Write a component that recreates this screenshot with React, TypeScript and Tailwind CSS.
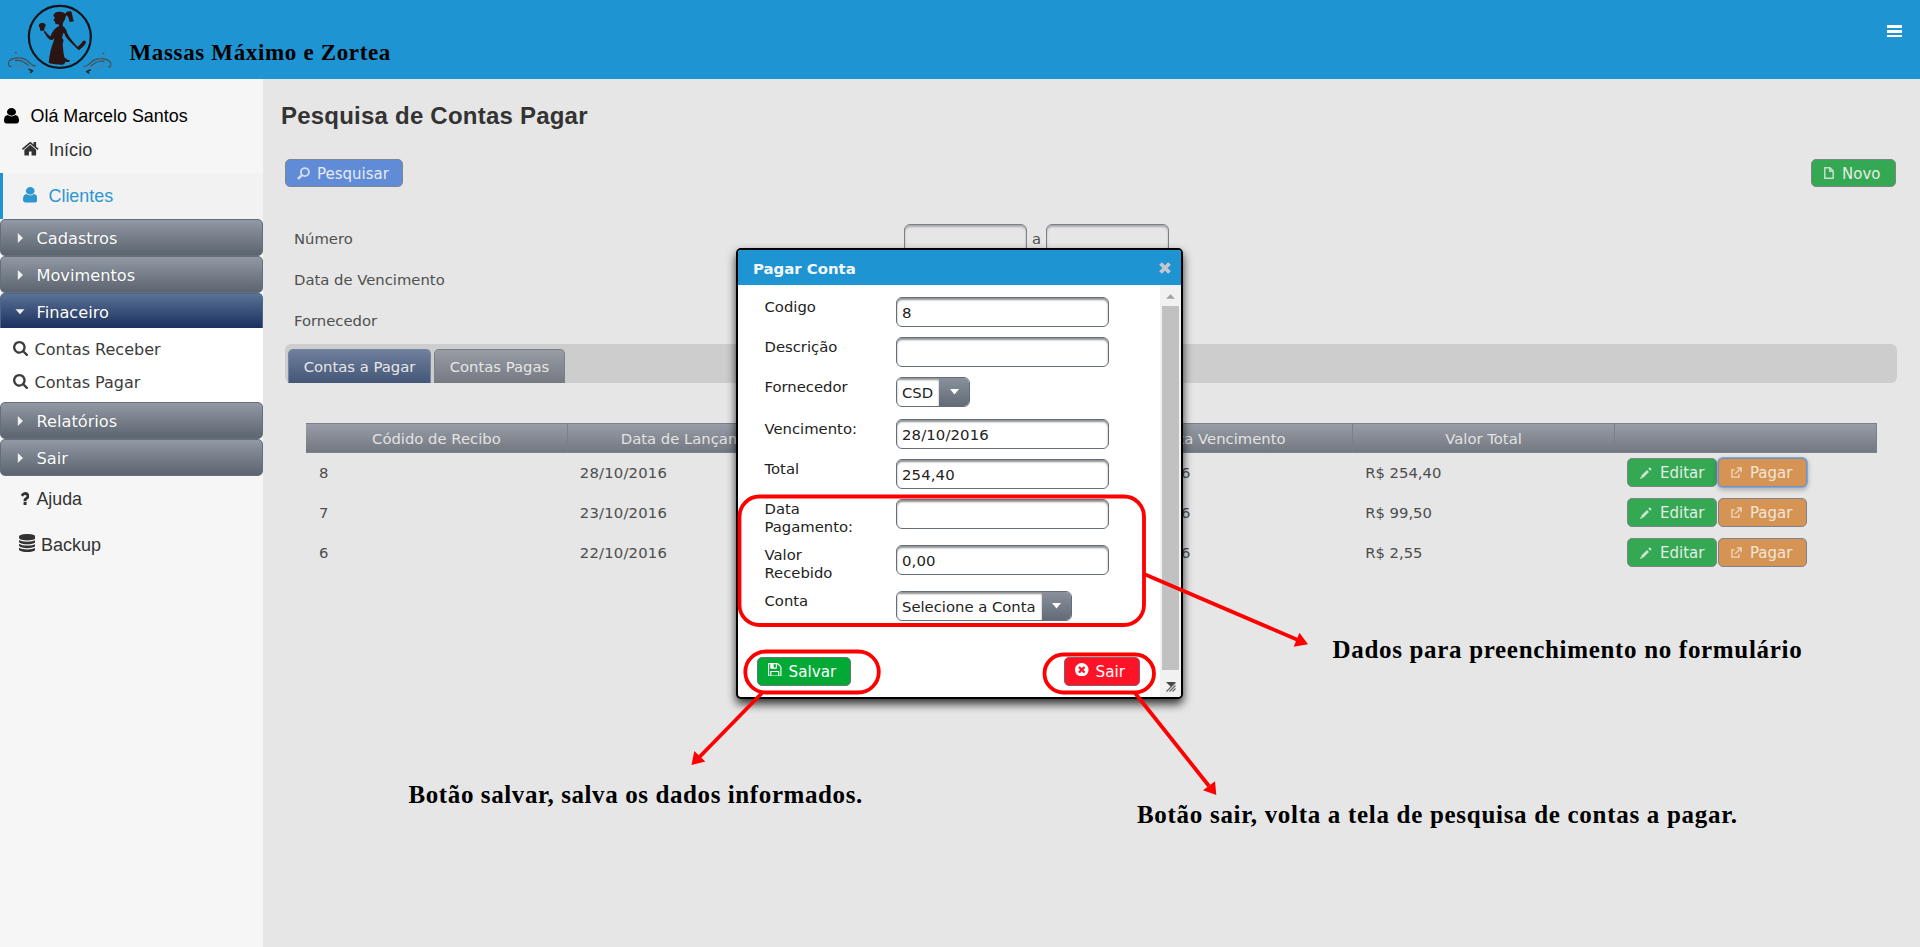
import React from "react";

type IconProps = { name: keyof typeof shapes; className?: string };

const shapes = {
  user: {
    box: "256 128 1280 1536",
    d: "M1536 1399q0 109-62.5 187t-150.5 78h-854q-88 0-150.5-78t-62.5-187q0-85 8.5-160.5t31.5-152 58.5-131 94-89 134.5-34.5q131 128 313 128t313-128q76 0 134.5 34.5t94 89 58.5 131 31.5 152 8.5 160.5zm-256-887q0 159-112.5 271.5t-271.5 112.5-271.5-112.5-112.5-271.5 112.5-271.5 271.5-112.5 271.5 112.5 112.5 271.5z",
  },
  home: {
    box: "89 253 1614 1283",
    d: "M1472 992v480q0 26-19 45t-45 19h-384v-384h-256v384h-384q-26 0-45-19t-19-45v-480q0-1 .5-3t.5-3l575-474 575 474q1 2 1 6zm223-69l-62 74q-8 9-21 11h-3q-13 0-21-7l-692-577-692 577q-12 8-24 7-13-2-21-11l-62-74q-8-10-7-23.5t11-21.5l719-599q32-26 76-26t76 26l244 204v-195q0-14 9-23t23-9h192q14 0 23 9t9 23v408l219 182q10 8 11 21.5t-7 23.5z",
  },
  search: {
    box: "64 128 1664 1664",
    d: "M1216 832q0-185-131.5-316.5t-316.5-131.5-316.5 131.5-131.5 316.5 131.5 316.5 316.5 131.5 316.5-131.5 131.5-316.5zm512 832q0 52-38 90t-90 38q-54 0-90-38l-343-342q-179 124-399 124-143 0-273.5-55.5t-225-150-150-225-55.5-273.5 55.5-273.5 150-225 225-150 273.5-55.5 273.5 55.5 225 150 150 225 55.5 273.5q0 220-124 399l343 343q37 37 37 90z",
  },
  question: {
    box: "387 256 1017 1280",
    d: "M1088 1256v240q0 16-12 28t-28 12h-240q-16 0-28-12t-12-28v-240q0-16 12-28t28-12h240q16 0 28 12t12 28zm316-600q0 54-15.5 101t-35 76.5-55 59.5-57.5 43.5-61 35.5q-41 23-68.5 65t-27.5 67q0 17-12 32.5t-28 15.5h-240q-15 0-25.5-18.5t-10.5-37.5v-45q0-83 65-156.5t143-108.5q59-27 84-56t25-76q0-42-46.5-74t-107.5-32q-65 0-108 29-35 25-107 115-13 16-31 16-12 0-25-8l-164-125q-13-10-15.5-25t5.5-28q160-266 464-266 80 0 161 31t146 83 106 127.5 41 158.5z",
  },
  database: {
    box: "128 0 1536 1792",
    d: "M896 768q237 0 443-43t325-127v170q0 69-103 128t-280 93.5-385 34.5-385-34.5-280-93.5-103-128v-170q119 84 325 127t443 43zm0 768q237 0 443-43t325-127v170q0 69-103 128t-280 93.5-385 34.5-385-34.5-280-93.5-103-128v-170q119 84 325 127t443 43zm0-384q237 0 443-43t325-127v170q0 69-103 128t-280 93.5-385 34.5-385-34.5-280-93.5-103-128v-170q119 84 325 127t443 43zm0-1152q208 0 385 34.5t280 93.5 103 128v128q0 69-103 128t-280 93.5-385 34.5-385-34.5-280-93.5-103-128v-128q0-69 103-128t280-93.5 385-34.5z",
  },
  floppy: {
    box: "128 128 1536 1536",
    d: "M512 1536h768v-384h-768v384zm896 0h128v-896q0-14-10-38.5t-20-34.5l-281-281q-10-10-34-20t-39-10v416q0 40-28 68t-68 28h-576q-40 0-68-28t-28-68v-416h-128v1280h128v-416q0-40 28-68t68-28h832q40 0 68 28t28 68v416zm-384-928v-320q0-13-9.5-22.5t-22.5-9.5h-192q-13 0-22.5 9.5t-9.5 22.5v320q0 13 9.5 22.5t22.5 9.5h192q13 0 22.5-9.5t9.5-22.5zm640 32v928q0 40-28 68t-68 28h-1344q-40 0-68-28t-28-68v-1344q0-40 28-68t68-28h928q40 0 88 20t76 48l280 280q28 28 48 76t20 88z",
  },
  timesCircle: {
    box: "128 128 1536 1536",
    d: "M1277 1122q0-26-19-45l-181-181 181-181q19-19 19-45 0-27-19-46l-90-90q-19-19-46-19-26 0-45 19l-181 181-181-181q-19-19-45-19-27 0-46 19l-90 90q-19 19-19 46 0 26 19 45l181 181-181 181q-19 19-19 45 0 27 19 46l90 90q19 19 46 19 26 0 45-19l181-181 181 181q19 19 45 19 27 0 46-19l90-90q19-19 19-46zm387-226q0 209-103 385.5t-279.5 279.5-385.5 103-385.5-103-279.5-279.5-103-385.5 103-385.5 279.5-279.5 385.5-103 385.5 103 279.5 279.5 103 385.5z",
  },
};

function Icon({ name, className = "" }: IconProps) {
  const s = shapes[name];
  return (
    <svg viewBox={s.box} preserveAspectRatio="none" fill="currentColor" className={`shrink-0 ${className}`}>
      <path d={s.d} />
    </svg>
  );
}

function Flourish() {
  return (
    <g fill="none" strokeLinecap="round">
      <path d="M106 197C98 200 94 193 84 184C70 171 42 170 28 183C22 191 26 201 33 199" stroke="#4a4a50" strokeWidth="3.500" />
      <path d="M46 182C60 178 73 185 86 197" stroke="#4a4a50" strokeWidth="3.500" />
      <path d="M59 178C57 167 50 166 47 159M51 205C45 197 56 190 60 198M64 207C60 198 76 194 77 203M84 197C94 199 98 206 94 213M46 184C51 188 49 195 43 196" stroke="#5a7890" strokeWidth="2.500" />
      <path d="M87 208L98 213M92 217L97 213" stroke="#26221f" strokeWidth="4.500" />
      <circle cx="47" cy="158" r="1.500" stroke="#4a4a50" strokeWidth="2" />
    </g>
  );
}

function Logo() {
  return (
    <svg viewBox="0 0 360 237" className="h-[79px] w-[120px] shrink-0">
      <circle cx="179.500" cy="110.500" r="93" fill="none" stroke="#101418" strokeWidth="6.500" />
      <g fill="#2b1512">
        <path d="M160 47C161 38 172 34 184 36C190 37 194 39 196 42C197 35 204 32 212 34C218 38 216 50 222 64L209 66C206 58 207 50 198 46C197 54 194 62 189 68L188 78C197 83 201 94 203 105L197 106L190 98L186 114C192 119 191 126 188 130C189 146 190 158 193 172C199 176 203 182 210 181C210 187 203 187 196 185C195 190 192 194 186 194C173 193 158 193 146 189C148 166 153 143 161 124L163 113C160 121 152 121 147 117C140 111 136 102 131 95L135 92C140 100 146 106 152 109C156 98 163 84 177 79L176 73L167 73L165 65L160 60L165 54Z" />
        <path d="M117 75C118 68 135 67 137 75C138 79 134 80 134 83L132 92L121 92L119 82C116 80 116 78 117 75Z" />
        <path d="M196 100L203 102C210 116 223 130 233 140C240 136 243 131 248 124C253 119 260 123 257 130C253 139 244 144 238 151L231 146C218 132 204 120 195 107Z" />
      </g>
      <Flourish />
      <g transform="matrix(-1 0 0 1 358 2)">
        <Flourish />
      </g>
    </svg>
  );
}

function Accordion({ label, open = false }: { label: string; open?: boolean }) {
  return (
    <div
      className={
        open
          ? "flex h-[35px] items-center rounded-t-[5px] border border-b-0 border-[#4f6585] bg-linear-to-b from-[#5b7194] to-[#1b315f] pt-[2px] text-[16.2px] text-white"
          : "flex h-[37px] items-center rounded-[5px] border border-[#656f7b] bg-linear-to-b from-[#9299a5] to-[#5b646f] pt-px text-[16.2px] text-white"
      }
    >
      <svg viewBox="0 0 10 10" className="ml-[14px] mr-[11.500px] size-[10px] shrink-0 fill-[#f0f0f0]">
        {open ? <path d="M.5 2.200H9.500L5 7.200Z" /> : <path d="M2.800 0V10L8 5Z" />}
      </svg>
      <span className="pt-[2px] [text-shadow:0_0_1px_rgba(0,0,0,0.3)]">{label}</span>
    </div>
  );
}

function Search16() {
  return (
    <svg viewBox="0 0 12 12" className="size-[13px] shrink-0 fill-none stroke-[#d3dcec]">
      <circle cx="7.300" cy="4.700" r="3.700" strokeWidth="1.700" />
      <path d="M4.600 7.500L.9 11" strokeWidth="2.400" />
    </svg>
  );
}

function Doc16() {
  return (
    <svg viewBox="0 0 10 12" className="h-[12px] w-[10px] shrink-0 fill-none stroke-[#c5dfcb]" strokeWidth="1.500">
      <path d="M.8 .8H6L9.200 4V11.200H.8ZM5.800 1V4.300H9" />
    </svg>
  );
}

function Pencil16() {
  return (
    <svg viewBox="0 0 12 12" className="size-[12px] shrink-0 stroke-[#cfe6d5]" strokeWidth="2.700">
      <path d="M2.200 9.800L8 4M9.300 2.700L10.700 1.300" />
      <path d="M.5 11.500L2.500 9.500" strokeWidth="1.500" />
    </svg>
  );
}

function Ext16() {
  return (
    <svg viewBox="0 0 12 12" className="size-[11px] shrink-0 fill-none stroke-[#eed7bf]" strokeWidth="1.500">
      <path d="M4 3.200H1V11H8.700V8" />
      <path d="M6.300 1H11V5.700M10.600 1.400L8 4M8 4L4.500 7.500" />
    </svg>
  );
}

function GridRow({ id, date, total, focused = false }: { id: string; date: string; total: string; focused?: boolean }) {
  return (
    <div className="grid h-[40px] grid-cols-[repeat(6,261.800px)] items-center text-[14.800px] text-[#4d4d4d] *:pl-[12px]">
      <span className="translate-x-px">{id}</span>
      <span className="tracking-[0.2px]">{date}</span>
      <span />
      <span className="tracking-[0.2px]">{date}</span>
      <span>{total}</span>
      <div className="flex gap-px pb-px">
        <button className="flex h-[29px] w-[90px] items-center gap-[8px] rounded-[5px] border border-[#7c8784] bg-[#34a853] pl-[12px] text-[15px] text-[#e4ece6]">
          <Pencil16 />
          <span className="pt-px">Editar</span>
        </button>
        <button
          className={
            focused
              ? "flex h-[29px] w-[89px] items-center gap-[8px] rounded-[5px] border border-[#7390bb] bg-[#d59453] pl-[12px] text-[15px] text-[#f0e6dc] shadow-[0_0_0_1px_#86a6da,0_2px_5px_1px_rgba(0,0,0,0.25)]"
              : "flex h-[29px] w-[89px] items-center gap-[8px] rounded-[5px] border border-[#7d838a] bg-[#d59453] pl-[12px] text-[15px] text-[#f0e6dc]"
          }
        >
          <Ext16 />
          <span className="pt-px">Pagar</span>
        </button>
      </div>
    </div>
  );
}

function Field({ label, value, className = "h-[40px]" }: { label: string; value: string; className?: string }) {
  return (
    <div className={`flex items-start ${className}`}>
      <label className="w-[131.500px] whitespace-pre-line pt-px text-[14.800px] leading-[18px]">{label}</label>
      <div className="flex h-[30px] w-[213px] items-center rounded-[6px] border border-[#646e7a] bg-white pl-[5px] pt-[2px] text-[14.900px] tracking-[0.1px] shadow-[inset_0_2px_2px_#909090]">
        {value}
      </div>
    </div>
  );
}

function Select({ label, value, className }: { label: string; value: string; className: string }) {
  return (
    <div className={`flex items-start ${className}`}>
      <label className="w-[131.500px] pt-px text-[14.800px] leading-[18px]">{label}</label>
      <div className="flex h-[30px] overflow-hidden rounded-[6px] border border-[#646e7a] bg-white">
        <span className="flex items-center pl-[5px] pr-[6px] pt-[2px] text-[14.800px] shadow-[inset_0_2px_2px_#909090]">{value}</span>
        <span className="flex w-[29.500px] items-center justify-center bg-linear-to-b from-[#8a919d] to-[#626b76] pl-px">
          <svg viewBox="0 0 10 6" className="h-[5.500px] w-[9px] fill-white">
            <path d="M0 0H10L5 6Z" />
          </svg>
        </span>
      </div>
    </div>
  );
}

function PayDialog() {
  return (
    <section className="absolute left-[736px] top-[248px] flex h-[451px] w-[447px] flex-col overflow-hidden rounded-[5px] border-2 border-black bg-white text-[#222] shadow-[0_5px_10px_rgba(0,0,0,0.8)]">
      <header className="flex h-[35px] shrink-0 items-center justify-between bg-[#1e94d2] pl-[15px] pr-[10px]">
        <h2 className="pt-[4px] text-[14.900px] font-bold text-[#f4f8fb]">Pagar Conta</h2>
        <svg viewBox="0 0 12 12" className="size-[12px] stroke-[#c3c8cc]" strokeWidth="3.800">
          <path d="M1.500 1.500L10.500 10.500M10.500 1.500L1.500 10.500" />
        </svg>
      </header>
      <div className="flex min-h-0 flex-1">
        <div className="flex flex-1 flex-col pl-[19px] pt-[12px]">
          <div className="pl-[7.500px]">
            <Field label="Codigo" value="8" />
            <Field label="Descrição" value="" />
            <Select label="Fornecedor" value="CSD" className="h-[42px]" />
            <Field label="Vencimento:" value="28/10/2016" />
            <Field label="Total" value="254,40" />
            <Field label={"Data\nPagamento:"} value="" className="h-[46px]" />
            <Field label={"Valor\nRecebido"} value="0,00" className="h-[46px]" />
            <Select label="Conta" value="Selecione a Conta" className="h-[66px]" />
          </div>
          <div className="flex justify-between pr-[20px]">
            <button className="flex h-[29px] w-[94px] items-center rounded-[5px] border border-[#647a72] bg-[#02a935] pl-[10px] text-[15.200px] text-white">
              <Icon name="floppy" className="mb-[4px] mr-[7px] size-[13.500px]" />
              <span className="pt-[2px]">Salvar</span>
            </button>
            <button className="flex h-[29px] w-[76px] items-center rounded-[5px] border border-[#80606c] bg-[#ff1427] pl-[10px] text-[15.200px] text-white">
              <Icon name="timesCircle" className="mb-[4px] mr-[7px] size-[13.500px]" />
              <span className="pt-[2px]">Sair</span>
            </button>
          </div>
        </div>
        <div className="flex w-[21px] flex-col items-center bg-[#f1f1f1]">
          <div className="flex h-[21px] items-center justify-center pt-[2px]">
            <svg viewBox="0 0 10 5" className="h-[5px] w-[9px] fill-[#a3a3a3]">
              <path d="M0 5H10L5 0Z" />
            </svg>
          </div>
          <div className="h-[364px] w-[17px] bg-[#c1c1c1]" />
          <svg viewBox="0 0 10 10" className="mt-[12px] size-[10px]">
            <path d="M0 0H9.500L5 5Z" fill="#454545" />
            <path d="M.5 9.500L9.500 .5M3.500 9.500L9.500 3.500M6.500 9.500L9.500 6.500" stroke="#666" strokeWidth="1.300" />
          </svg>
        </div>
      </div>
    </section>
  );
}

function Annotations() {
  return (
    <>
      <svg viewBox="0 0 1920 947" className="pointer-events-none absolute left-0 top-0 h-[947px] w-[1920px]">
        <g fill="none" stroke="#fe0000" strokeWidth="3.800">
          <rect x="739.500" y="496.500" width="404.500" height="128.500" rx="20" />
          <rect x="745.300" y="651.500" width="133.500" height="41" rx="20.500" />
          <rect x="1044.500" y="654.500" width="109.500" height="38" rx="19" />
          <path d="M1144 574L1298 640M762 693L699 757.500M1135 693L1209 786" />
        </g>
        <g fill="#fe0000">
          <path d="M1308 644.300L1293.700 646.700L1299.400 632.800Z" />
          <path d="M691.500 765L694.300 751L705.300 761.600Z" />
          <path d="M1216.300 795L1203 790.300L1215 781.300Z" />
        </g>
      </svg>
      <p className="absolute left-[1332.500px] top-[635px] whitespace-nowrap font-['Liberation_Serif',serif] text-[25px] font-bold leading-[30px] tracking-[0.68px] text-black">
        Dados para preenchimento no formulário
      </p>
      <p className="absolute left-[408.500px] top-[780px] whitespace-nowrap font-['Liberation_Serif',serif] text-[25px] font-bold leading-[30px] tracking-[0.6px] text-black">
        Botão salvar, salva os dados informados.
      </p>
      <p className="absolute left-[1137px] top-[800px] whitespace-nowrap font-['Liberation_Serif',serif] text-[25px] font-bold leading-[30px] tracking-[0.7px] text-black">
        Botão sair, volta a tela de pesquisa de contas a pagar.
      </p>
    </>
  );
}

const headCell = "border-r border-[#7b7f88] last:border-r-0";

export default function App() {
  return (
    <div className="relative flex h-[947px] w-[1920px] flex-col overflow-hidden bg-[#e6e6e6] font-['DejaVu_Sans',Verdana,sans-serif]">
      <header className="flex h-[79px] shrink-0 items-start bg-[#1e94d2]">
        <Logo />
        <h1 className="ml-[9.500px] mt-[38px] font-['Liberation_Serif',serif] text-[23px] font-bold leading-[30px] tracking-[0.65px] text-black">
          Massas Máximo e Zortea
        </h1>
        <div className="ml-auto mr-[18px] mt-[25px] flex w-[15px] flex-col gap-[2px]">
          <span className="h-[3px] bg-white" />
          <span className="h-[2.500px] bg-white" />
          <span className="h-[2.500px] bg-white" />
        </div>
      </header>

      <div className="flex min-h-0 flex-1">
        <aside className="w-[263px] shrink-0 bg-[#f6f6f6] pt-[22px] text-[#333]">
          <div className="flex h-[30px] items-center pl-[4px] font-['Liberation_Sans',sans-serif] text-[17.900px] text-black">
            <Icon name="user" className="mr-[11.500px] h-[15.500px] w-[15px]" />
            Olá Marcelo Santos
          </div>
          <div className="mb-[4px] flex h-[38px] items-center pl-[22px] font-['Liberation_Sans',sans-serif] text-[18.100px]">
            <Icon name="home" className="mb-[2px] mr-[10.500px] h-[13.500px] w-[16.500px]" />
            <span className="pt-px">Início</span>
          </div>
          <div className="flex h-[46px] items-center border-l-[3px] border-[#1e94d2] bg-[#f2f2f2] pl-[19.500px] font-['Liberation_Sans',sans-serif] text-[17.900px] text-[#2c97d1]">
            <Icon name="user" className="mb-[2px] mr-[11.500px] h-[15.500px] w-[14.500px]" />
            Clientes
          </div>
          <Accordion label="Cadastros" />
          <Accordion label="Movimentos" />
          <Accordion label="Finaceiro" open />
          <div className="h-[74px] bg-white pt-[5px] text-[16px] text-[#3c3c3c]">
            <div className="flex h-[33px] items-center pl-[13px]">
              <Icon name="search" className="mb-[3px] mr-[6.500px] size-[15px]" />
              Contas Receber
            </div>
            <div className="flex h-[33px] items-center pl-[13px]">
              <Icon name="search" className="mb-[3px] mr-[6.500px] size-[15px]" />
              Contas Pagar
            </div>
          </div>
          <Accordion label="Relatórios" />
          <Accordion label="Sair" />
          <div className="flex h-[46px] items-center pl-[19.500px] font-['Liberation_Sans',sans-serif] text-[17.800px]">
            <Icon name="question" className="mb-[2px] mr-[7.500px] h-[13px] w-[9.500px]" />
            Ajuda
          </div>
          <div className="flex h-[46px] items-center pl-[18.500px] font-['Liberation_Sans',sans-serif] text-[18px]">
            <Icon name="database" className="mb-[4px] mr-[6px] h-[18px] w-[16.500px]" />
            Backup
          </div>
        </aside>

        <main className="flex-1 pl-[22px] pr-[23px] pt-[22px] text-[14.800px] text-[#4f4f4f]">
          <h2 className="-ml-[4px] font-['Liberation_Sans',sans-serif] text-[24px] font-bold leading-[30px] tracking-[0.22px] text-[#333]">
            Pesquisa de Contas Pagar
          </h2>
          <div className="mt-[28px] flex justify-between">
            <button className="flex h-[28px] w-[118px] items-center gap-[7px] rounded-[5px] border border-[#7f8590] bg-[#608bd6] pl-[11px] text-[15px] text-[#e6eaf2]">
              <Search16 />
              <span className="pt-[2px]">Pesquisar</span>
            </button>
            <button className="mr-px flex h-[28px] w-[85px] items-center gap-[8px] rounded-[5px] border border-[#7c8784] bg-[#34a853] pl-[12px] text-[15px] text-[#e4ece6]">
              <Doc16 />
              <span className="pt-[2px]">Novo</span>
            </button>
          </div>
          <div className="mt-[32px] pl-[9px]">
            <div className="flex h-[41px] items-center">
              <span className="w-[610px]">Número</span>
              <span className="mb-[2px] h-[30px] w-[123px] rounded-[6px] border border-[#7b818a] shadow-[inset_0_2px_2px_#aaa]" />
              <span className="w-[19px] text-center">a</span>
              <span className="mb-[2px] h-[30px] w-[123px] rounded-[6px] border border-[#7b818a] shadow-[inset_0_2px_2px_#aaa]" />
            </div>
            <div className="flex h-[41px] items-center">Data de Vencimento</div>
            <div className="flex h-[41px] items-center">Fornecedor</div>
          </div>
          <div className="mt-[2px] flex h-[39px] items-end gap-[3px] rounded-[6px] bg-[#cdcdcd] pl-[3px]">
            <div className="flex h-[34px] w-[143px] items-center justify-center rounded-t-[5px] border border-b-0 border-[#7386a0] bg-linear-to-b from-[#6f7f9c] to-[#455777] pt-px text-[#e6e6e6]">
              Contas a Pagar
            </div>
            <div className="flex h-[34px] w-[131px] items-center justify-center rounded-t-[5px] border border-b-0 border-[#7b8087] bg-linear-to-b from-[#979ca5] to-[#747982] pt-px text-[#e6e6e6]">
              Contas Pagas
            </div>
          </div>
          <div className="ml-[21px] mt-[40px] w-[1571px]">
            <div className="grid h-[30px] grid-cols-[repeat(6,261.800px)] overflow-hidden border border-l-0 border-[#7b8089] bg-linear-to-b from-[#979ca6] to-[#737881] text-center leading-[30px] text-[#e2e2e2]">
              <span className={headCell}>Códido de Recibo</span>
              <span className={headCell}>Data de Lançamento</span>
              <span className={headCell} />
              <span className={headCell}>Data Vencimento</span>
              <span className={headCell}>Valor Total</span>
              <span className={headCell} />
            </div>
            <GridRow id="8" date="28/10/2016" total="R$ 254,40" focused />
            <GridRow id="7" date="23/10/2016" total="R$ 99,50" />
            <GridRow id="6" date="22/10/2016" total="R$ 2,55" />
          </div>
        </main>
      </div>

      <PayDialog />
      <Annotations />
    </div>
  );
}
